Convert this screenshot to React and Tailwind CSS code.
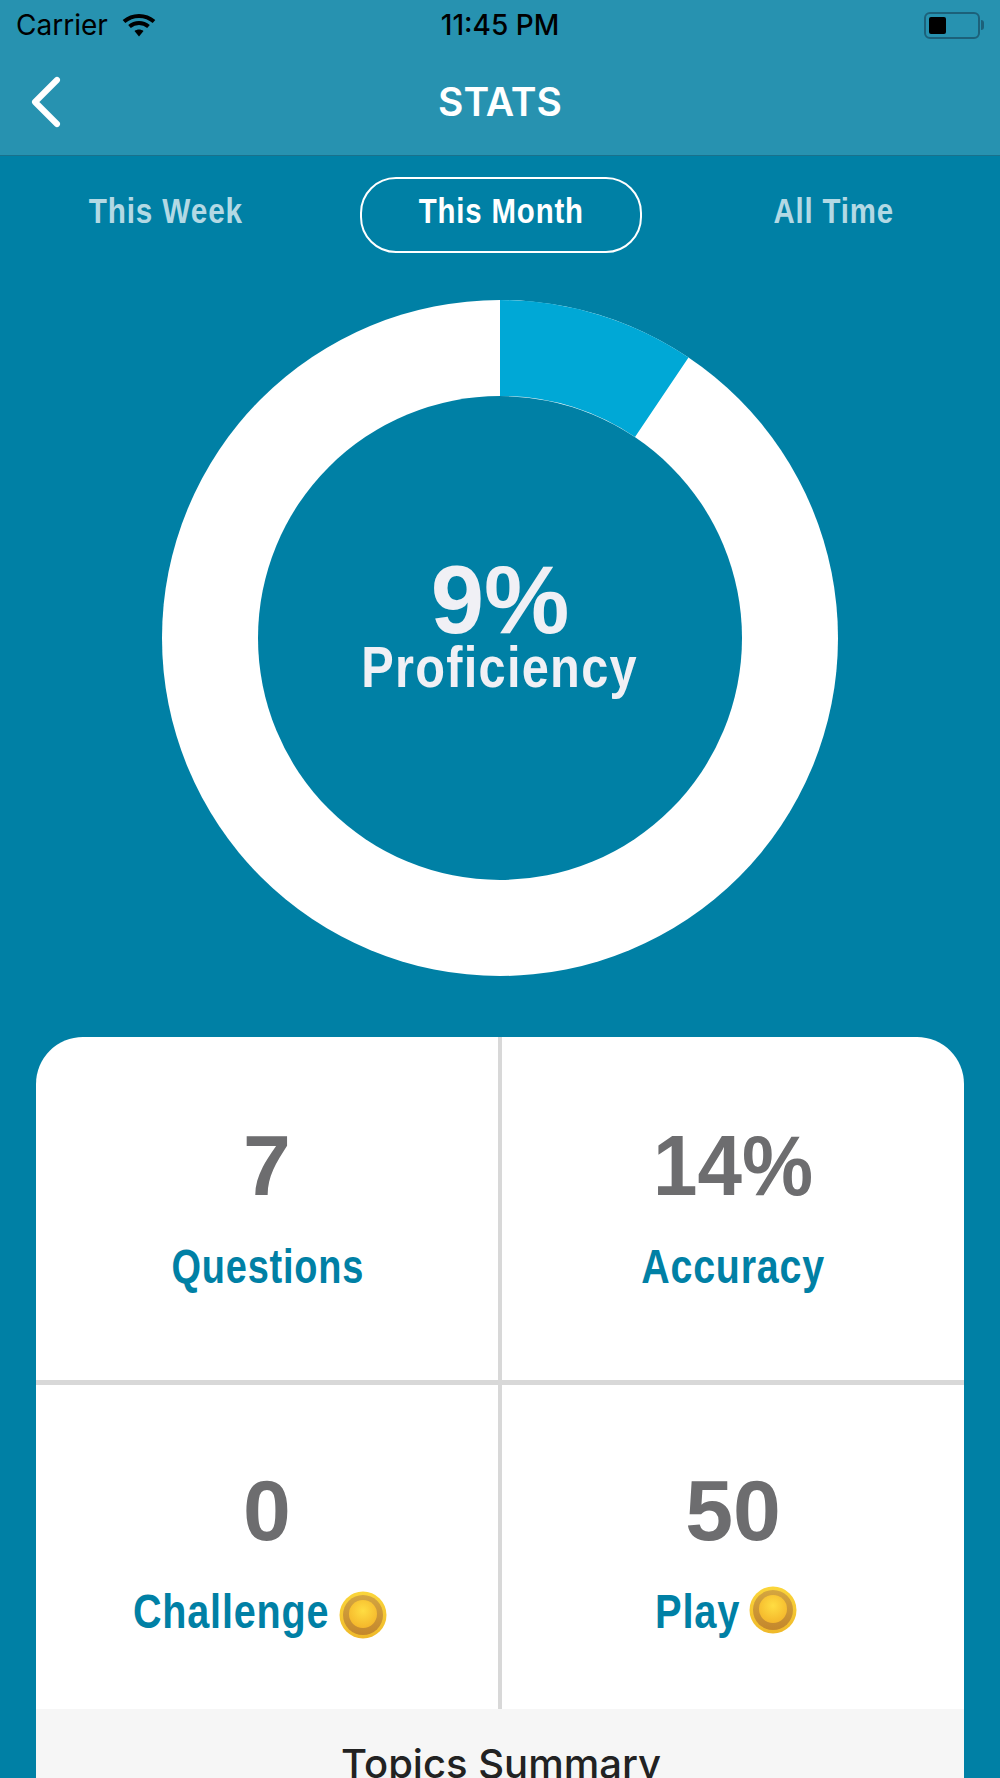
import { ChevronLeft } from 'lucide-react';

const narrow = "font-['Liberation_Sans',sans-serif] font-bold";
const system = "font-['Inter','Liberation_Sans',sans-serif]";

function Wifi() {
  return (
    <svg width="34" height="24" viewBox="0 0 34 24" fill="none" stroke="#000">
      <path d="M2 8.5C10.5 1 23.5 1 32 8.5" strokeWidth="4" />
      <path d="M7.5 13.5C13 8.8 21 8.8 26.5 13.5" strokeWidth="4" />
      <path d="M12.5 18C15 16 19 16 21.5 18L17 23.5Z" fill="#000" stroke="none" />
    </svg>
  );
}

function Battery() {
  return (
    <div className="flex items-center">
      <div className="w-[56px] h-[27px] rounded-[6px] border-2 border-[#1c617a] p-[3px]">
        <div className="w-[17px] h-full rounded-[2px] bg-black" />
      </div>
      <div className="w-[3px] h-[10px] ml-[1px] rounded-r bg-[#1c617a]" />
    </div>
  );
}

function Coin({ id }) {
  return (
    <svg width="48" height="48" viewBox="0 0 48 48" className="shrink-0 block">
      <defs>
        <linearGradient id={id + 'r'} x1="0" y1="0" x2="0" y2="1">
          <stop offset="0%" stopColor="#fbd63a" />
          <stop offset="100%" stopColor="#efb92a" />
        </linearGradient>
        <linearGradient id={id + 'm'} x1="0" y1="0" x2="0" y2="1">
          <stop offset="0%" stopColor="#d4a640" />
          <stop offset="100%" stopColor="#c4872c" />
        </linearGradient>
        <radialGradient id={id + 'c'} cx="50%" cy="38%" r="65%">
          <stop offset="0%" stopColor="#ffdd42" />
          <stop offset="100%" stopColor="#f4b52a" />
        </radialGradient>
      </defs>
      <circle cx="24" cy="24" r="23.5" fill={`url(#${id}r)`} />
      <circle cx="24" cy="24" r="20" fill={`url(#${id}m)`} />
      <circle cx="24" cy="23" r="14" fill={`url(#${id}c)`} />
    </svg>
  );
}

function Donut() {
  return (
    <div className="relative w-[676px] h-[676px] mx-auto mt-[47px]">
      <svg width="676" height="676" viewBox="0 0 676 676">
        <circle cx="338" cy="338" r="338" fill="#ffffff" />
        <path d="M338 0A338 338 0 0 1 526.5 57.5L473 137A242 242 0 0 0 338 96Z" fill="#00a8d6" />
        <circle cx="338" cy="338" r="242" fill="#0080a5" />
      </svg>
      <div className={`absolute inset-0 flex flex-col items-center justify-center text-[#f0f0f5] ${narrow}`}>
        <div className="text-[96px] leading-[78px] -mt-[16px]">9%</div>
        <div className="text-[58px] leading-[64px] -mt-[4px] tracking-[1.5px] scale-x-[0.84]">Proficiency</div>
      </div>
    </div>
  );
}

function Stat({ value, children, right, top, valueClass }) {
  return (
    <div className={`flex flex-col items-center ${top} ${right ? '' : 'border-r-[4px] border-[#d8d8d8]'}`}>
      <div className={`text-[86px] leading-[90px] text-[#6d6d6f] ${narrow} ${valueClass || ''}`}>{value}</div>
      <div className={`flex items-center mt-[29px] h-[56px] text-[48px] leading-[56px] tracking-[1px] text-[#0080a5] ${narrow}`}>
        {children}
      </div>
    </div>
  );
}

export default function App() {
  return (
    <div className="w-[1000px] h-[1778px] overflow-hidden bg-[#0080a5]">
      <header className="h-[156px] bg-[#2792b0] border-b border-[#19718c]">
        <div className={`grid grid-cols-3 items-center h-[50px] px-[16px] text-black ${system}`}>
          <div className="flex items-center gap-[14px] text-[28px]">Carrier <Wifi /></div>
          <div className="text-center text-[28px] font-medium">11:45 PM</div>
          <div className="flex justify-end"><Battery /></div>
        </div>
        <div className="relative flex items-center justify-center h-[104px] -mt-[2px]">
          <ChevronLeft size={88} strokeWidth={1.64} color="#ffffff" className="absolute left-[2px] top-[10px]" />
          <div className={`text-[39px] font-semibold text-white mt-[4px] ${system}`}>STATS</div>
        </div>
      </header>

      <div className={`grid grid-cols-3 items-center mt-[21px] text-[35px] tracking-[1px] ${narrow}`}>
        <div className="text-center text-[#b3d9e4] pb-[7px] pr-[2px] scale-x-[0.85]">This Week</div>
        <div className="justify-self-center w-[282px] h-[76px] ml-[2px] pb-[7px] flex items-center justify-center rounded-[36px] border-2 border-white text-white">
          <span className="scale-x-[0.84]">This Month</span>
        </div>
        <div className="text-center text-[#b3d9e4] pb-[7px] scale-x-[0.84]">All Time</div>
      </div>

      <Donut />

      <section className="mx-[36px] mt-[61px] rounded-t-[47px] bg-white overflow-hidden">
        <div className="grid grid-cols-[466px_1fr] h-[348px] border-b-[5px] border-[#d8d8d8]">
          <Stat value="7" top="pt-[83px]"><span className="scale-x-[0.79] ml-[2px]">Questions</span></Stat>
          <Stat value="14%" top="pt-[83px]" valueClass="scale-x-[0.93]" right><span className="scale-x-[0.82]">Accuracy</span></Stat>
        </div>
        <div className="grid grid-cols-[466px_1fr] h-[324px]">
          <Stat value="0" top="pt-[80px]">
            <div className="flex items-center gap-[10px] mr-[14px]">
              <span className="origin-left scale-x-[0.823] -mr-[42px]">Challenge</span>
              <span className="mt-[6px]"><Coin id="c1" /></span>
            </div>
          </Stat>
          <Stat value="50" top="pt-[80px]" right>
            <div className="flex items-center gap-[8px] mr-[14px]">
              <span className="origin-left scale-x-[0.83] -mr-[17px]">Play</span>
              <span className="-mt-[4px]"><Coin id="c2" /></span>
            </div>
          </Stat>
        </div>
        <div className={`h-[80px] bg-[#f6f6f6] pt-[25px] pl-[2px] text-center text-[40px] font-medium text-[#222222] ${system}`}>Topics Summary</div>
      </section>
    </div>
  );
}
